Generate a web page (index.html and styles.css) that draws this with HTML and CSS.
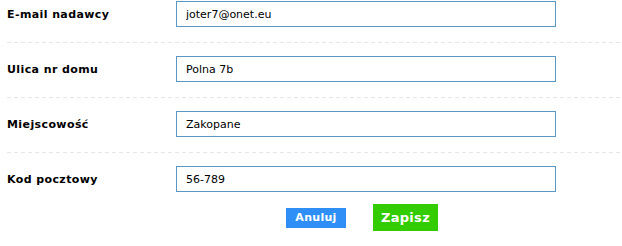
FILE: index.html
```html
<!DOCTYPE html>
<html lang="pl">
<head>
<meta charset="utf-8">
<link rel="stylesheet" href="styles.css">
</head>
<body>
<form class="form">
  <div class="row">
    <label class="label">E-mail nadawcy</label>
    <input class="field" type="text" value="joter7@onet.eu">
  </div>
  <div class="sep"></div>
  <div class="row">
    <label class="label">Ulica nr domu</label>
    <input class="field" type="text" value="Polna 7b">
  </div>
  <div class="sep"></div>
  <div class="row">
    <label class="label">Miejscowość</label>
    <input class="field" type="text" value="Zakopane">
  </div>
  <div class="sep"></div>
  <div class="row">
    <label class="label">Kod pocztowy</label>
    <input class="field" type="text" value="56-789">
  </div>
  <div class="actions">
    <button type="button" class="btn btn-cancel">Anuluj</button>
    <button type="button" class="btn btn-save">Zapisz</button>
  </div>
</form>
</body>
</html>
```
FILE: styles.css
```css
html, body {
  margin: 0;
  padding: 0;
  background: #ffffff;
}
body {
  font-family: "DejaVu Sans", Verdana, sans-serif;
  font-size: 11px;
  color: #000000;
}
.form {
  padding-top: 1px;
  width: 622px;
}
.row {
  display: flex;
  align-items: center;
  height: 26px;
}
.label {
  width: 169px;
  padding-left: 7px;
  font-weight: bold;
  font-size: 11px;
  letter-spacing: 0.4px;
}
.field {
  box-sizing: border-box;
  width: 380px;
  height: 26px;
  margin: 0;
  border: 1px solid #5a97c2;
  padding: 0 9px;
  font-family: "DejaVu Sans", Verdana, sans-serif;
  font-size: 11px;
  color: #000;
  background: #fff;
  outline: none;
}
.sep {
  margin: 15px 0 13px 7px;
  height: 1px;
  background: repeating-linear-gradient(to right, #e6e6e6 0 4px, transparent 4px 7px);
}
.actions {
  display: flex;
  align-items: center;
  gap: 27px;
  padding-left: 286px;
  margin-top: 12px;
}
.btn {
  border: none;
  margin: 0;
  color: #fff;
  font-family: "DejaVu Sans", Verdana, sans-serif;
  font-weight: bold;
  padding: 0;
  cursor: pointer;
}
.btn-cancel {
  width: 60px;
  height: 20px;
  background: #2f8ff6;
  font-size: 11px;
  letter-spacing: 0.3px;
}
.btn-save {
  width: 65px;
  height: 27px;
  background: #33cc00;
  font-size: 13px;
  letter-spacing: 0.3px;
}
```
